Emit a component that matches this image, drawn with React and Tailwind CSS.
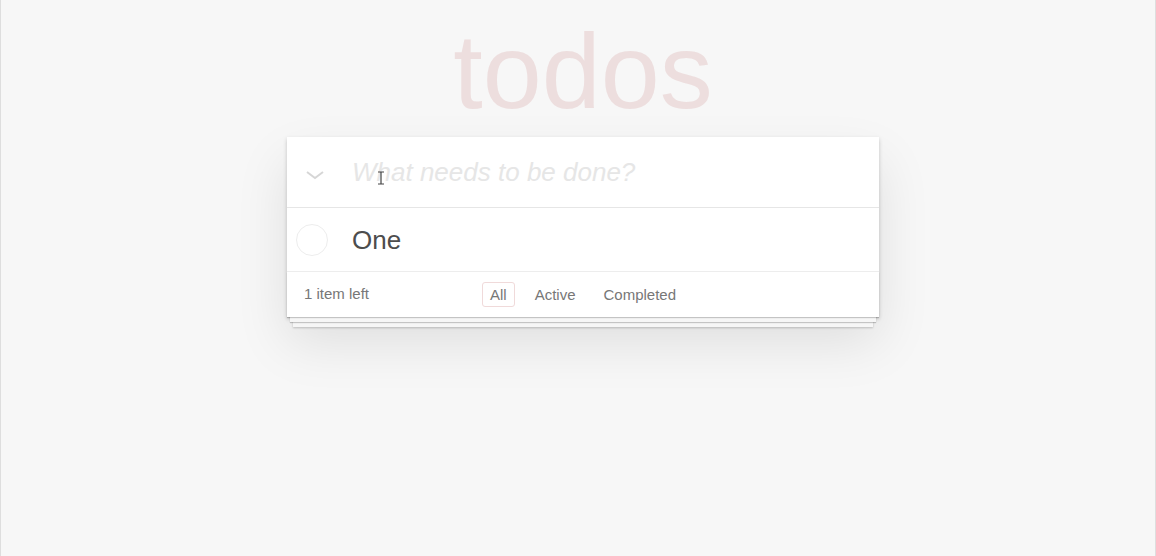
import React from "react";

// ─── Small pieces ────────────────────────────────────────────────────────────

function ToggleAll() {
  return (
    <svg width="20" height="12" viewBox="0 0 20 12" className="shrink-0">
      <path d="M2 3 L10 9 L18 3" fill="none" stroke="#d6d6d6" strokeWidth="2" />
    </svg>
  );
}

function IBeam() {
  return (
    <svg
      width="8"
      height="14"
      viewBox="0 0 8 14"
      className="absolute left-[376px] top-[171px] pointer-events-none">
      <path d="M1 1 H7 M4 1 V13 M1 13 H7" fill="none" stroke="#444" strokeWidth="1.2" />
    </svg>
  );
}

function FilterLink({ label, selected }) {
  return (
    <a
      className={
        selected
          ? "mx-[6px] px-[7px] py-[3px] leading-[17px] border rounded-[3px] border-[#f0dada] text-[#777]"
          : "mx-[6px] px-[7px] py-[3px] leading-[17px] border rounded-[3px] border-transparent text-[#777]"
      }>
      {label}
    </a>
  );
}

// ─── App ─────────────────────────────────────────────────────────────────────

export default function App() {
  return (
    <div
      className="relative min-h-[556px] w-full bg-[#f7f7f7] border-x border-[#dedede] flex flex-col items-center pl-[10px]"
      style={{ fontFamily: '"Liberation Sans", Arial, sans-serif' }}>
      <h1 className="mt-[18px] h-[106px] text-[106px] leading-[106px] text-[#eddede] font-normal text-center">
        todos
      </h1>

      <section className="mt-[13px] w-[592px] bg-white shadow-[0_2px_4px_rgba(0,0,0,0.2),0_25px_50px_rgba(0,0,0,0.1)]">
        {/* Header */}
        <div className="h-[70px] flex items-center">
          <div className="w-[55px] flex justify-center pt-[5px]">
            <ToggleAll />
          </div>
          <span className="ml-[10px] text-[26px] italic text-[#e6e6e6] leading-none">
            What needs to be done?
          </span>
        </div>

        {/* List */}
        <ul className="border-t border-[#e6e6e6]">
          <li className="h-[64px] flex items-center border-b border-[#ededed]">
            <div className="w-[65px] flex justify-start pl-[9px]">
              <div className="w-[32px] h-[32px] rounded-full border border-[#ededed]" />
            </div>
            <span className="text-[26px] text-[#4d4d4d] leading-none">One</span>
          </li>
        </ul>

        {/* Footer */}
        <footer className="relative h-[45px] flex items-center px-[17px] text-[15px] text-[#777]">
          <div className="absolute left-0 right-0 bottom-0 h-[45px] shadow-[0_1px_1px_rgba(0,0,0,0.2),0_8px_0_-3px_#f6f6f6,0_9px_1px_-3px_rgba(0,0,0,0.2),0_16px_0_-6px_#f6f6f6,0_17px_2px_-6px_rgba(0,0,0,0.2)]" />
          <div className="absolute inset-0 bg-white" />
          <span className="relative">1 item left</span>
          <div className="absolute inset-0 flex items-center justify-center pb-[1px]">
            <FilterLink label="All" selected />
            <FilterLink label="Active" />
            <FilterLink label="Completed" />
          </div>
        </footer>
      </section>

      <IBeam />
    </div>
  );
}
